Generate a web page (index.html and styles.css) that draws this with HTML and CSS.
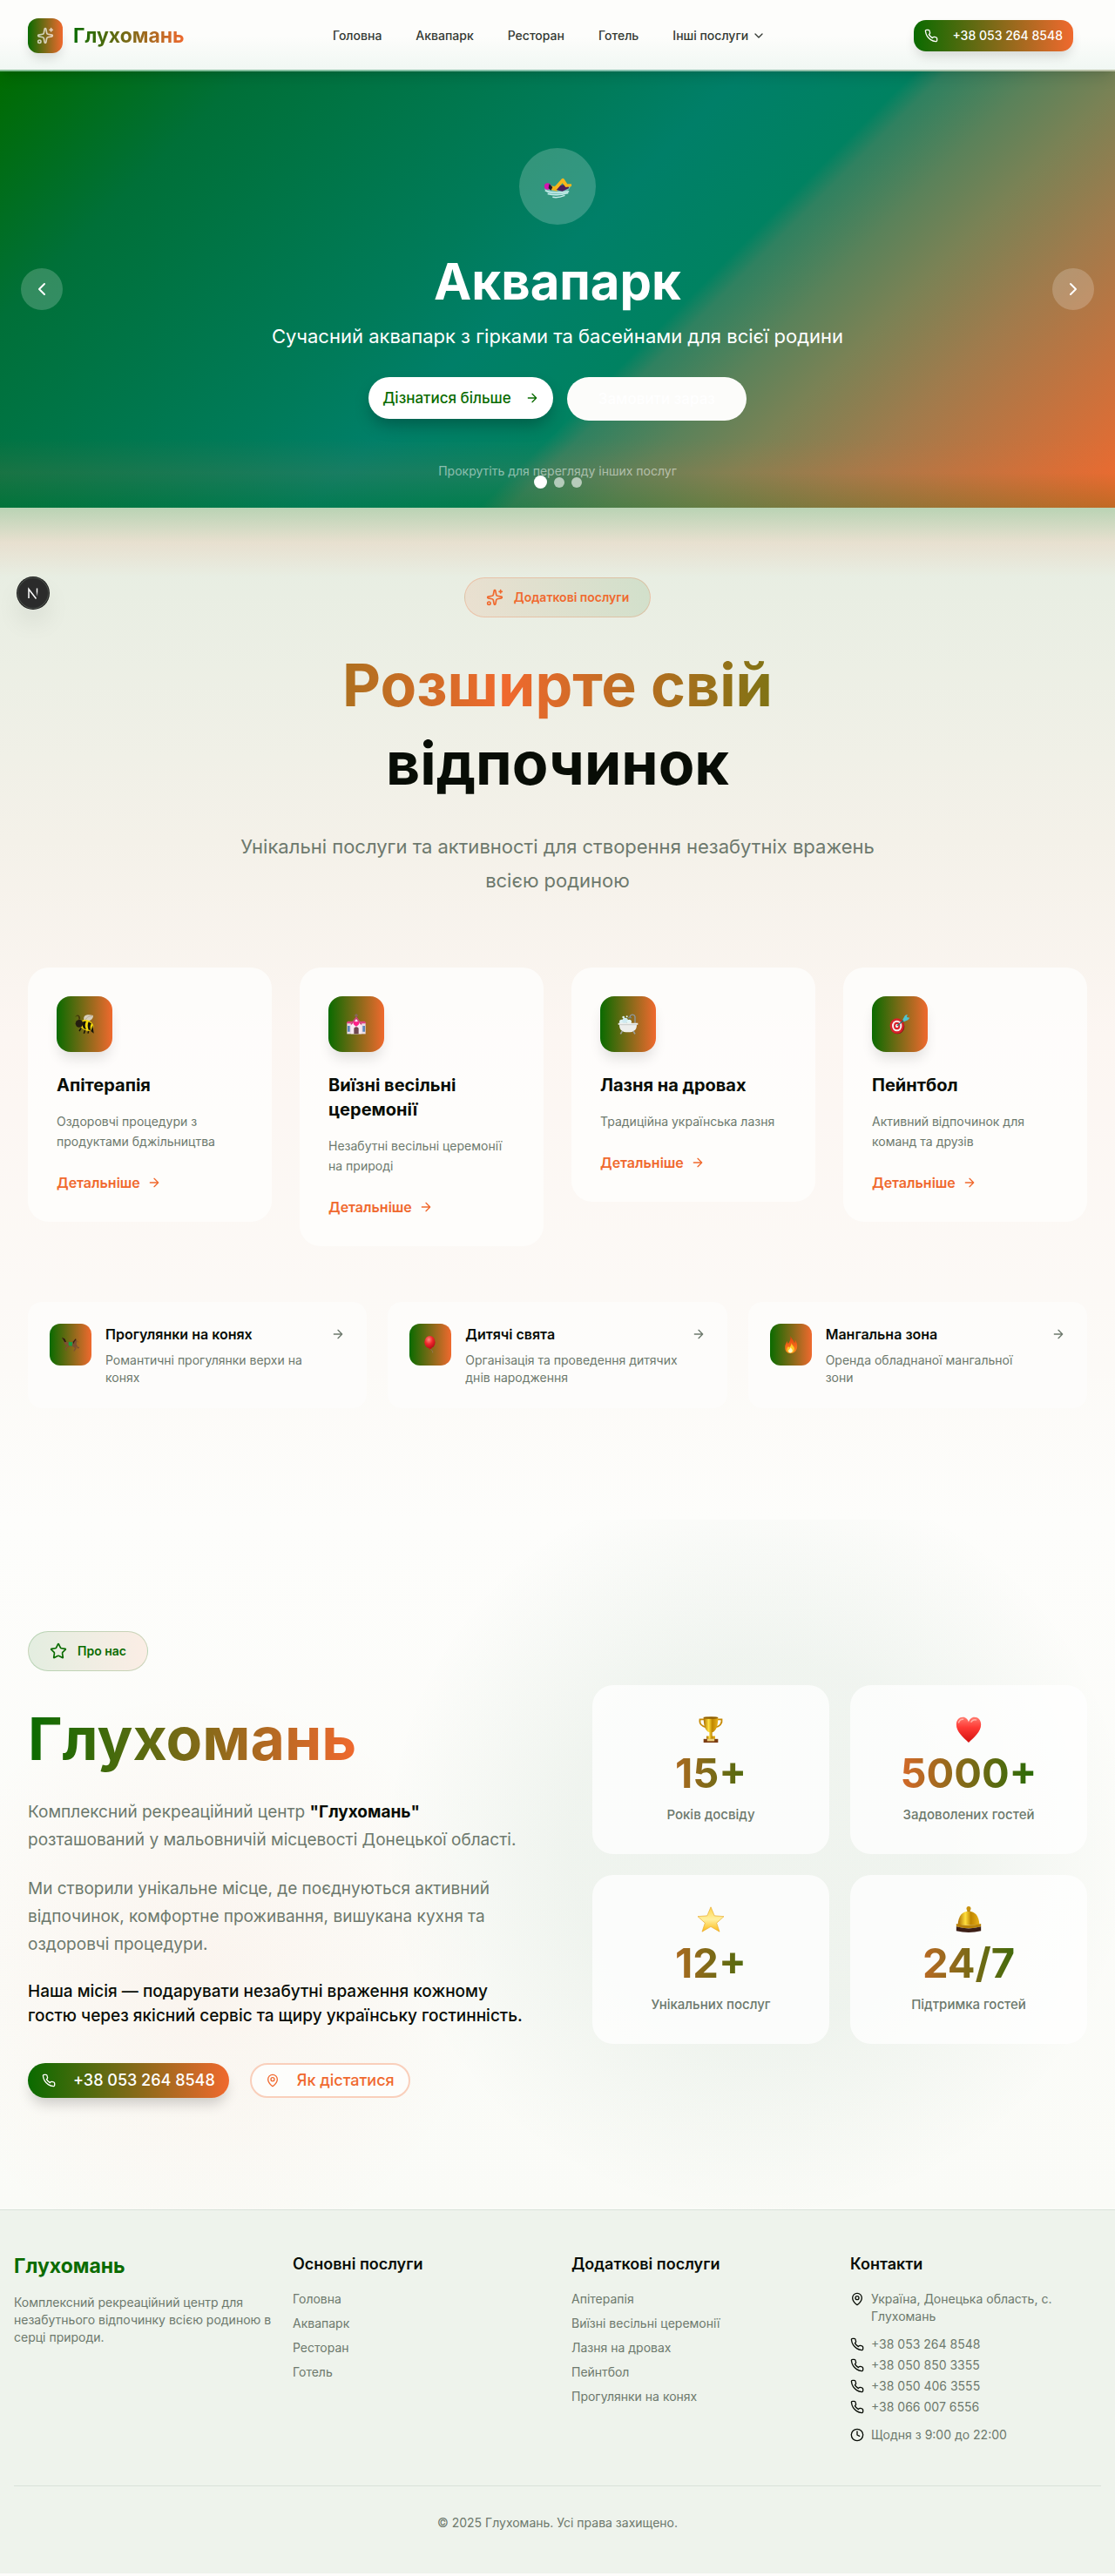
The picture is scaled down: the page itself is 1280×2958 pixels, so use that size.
FILE: index.html
```html
<!DOCTYPE html>
<html lang="uk">
<head>
<meta charset="utf-8">
<meta name="viewport" content="width=device-width, initial-scale=1">
<title>Глухомань</title>
<link rel="stylesheet" href="styles.css">
</head>
<body>
<svg class="sprite" aria-hidden="true">
  <defs>
    <linearGradient id="gold" x1="0" x2="1" y1="0" y2="0"><stop offset="0" stop-color="#a86a00"/><stop offset=".35" stop-color="#ffdf3d"/><stop offset=".6" stop-color="#c08600"/><stop offset="1" stop-color="#e8b21c"/></linearGradient>
    <linearGradient id="red" x1="0" x2="0" y1="0" y2="1"><stop offset="0" stop-color="#ff7a6e"/><stop offset=".4" stop-color="#ff3a35"/><stop offset="1" stop-color="#d3120f"/></linearGradient>
    <linearGradient id="sun" x1="0" x2="0" y1="0" y2="1"><stop offset="0" stop-color="#ffd34a"/><stop offset=".5" stop-color="#fff0a0"/><stop offset="1" stop-color="#fdb913"/></linearGradient>
    <linearGradient id="flame" x1="0" x2="0" y1="0" y2="1"><stop offset="0" stop-color="#e23a10"/><stop offset="1" stop-color="#ff8a1e"/></linearGradient>
    <radialGradient id="ball" cx=".4" cy=".3" r=".7"><stop offset="0" stop-color="#ff8d7e"/><stop offset=".5" stop-color="#f0282c"/><stop offset="1" stop-color="#b80d18"/></radialGradient>
  </defs>
  <symbol id="sparkles" viewBox="0 0 24 24"><path d="M11.017 2.814a1 1 0 0 1 1.966 0l1.051 5.558a2 2 0 0 0 1.594 1.594l5.558 1.051a1 1 0 0 1 0 1.966l-5.558 1.051a2 2 0 0 0-1.594 1.594l-1.051 5.558a1 1 0 0 1-1.966 0l-1.051-5.558a2 2 0 0 0-1.594-1.594l-5.558-1.051a1 1 0 0 1 0-1.966l5.558-1.051a2 2 0 0 0 1.594-1.594z"/><path d="M20 2v4M22 4h-4"/><circle cx="4" cy="20" r="2"/></symbol>
  <symbol id="phone" viewBox="0 0 24 24"><path d="M22 16.92v3a2 2 0 0 1-2.18 2 19.79 19.79 0 0 1-8.63-3.07 19.5 19.5 0 0 1-6-6 19.79 19.79 0 0 1-3.07-8.67A2 2 0 0 1 4.11 2h3a2 2 0 0 1 2 1.72 12.84 12.84 0 0 0 .7 2.81 2 2 0 0 1-.45 2.11L8.09 9.91a16 16 0 0 0 6 6l1.27-1.27a2 2 0 0 1 2.11-.45 12.84 12.84 0 0 0 2.81.7A2 2 0 0 1 22 16.92z"/></symbol>
  <symbol id="chevron-down" viewBox="0 0 24 24"><path d="m6 9 6 6 6-6"/></symbol>
  <symbol id="chevron-left" viewBox="0 0 24 24"><path d="m15 18-6-6 6-6"/></symbol>
  <symbol id="chevron-right" viewBox="0 0 24 24"><path d="m9 18 6-6-6-6"/></symbol>
  <symbol id="arrow" viewBox="0 0 24 24"><path d="M5 12h14M12 5l7 7-7 7"/></symbol>
  <symbol id="star" viewBox="0 0 24 24"><path d="M11.525 2.295a.53.53 0 0 1 .95 0l2.31 4.679a2.123 2.123 0 0 0 1.595 1.16l5.166.756a.53.53 0 0 1 .294.904l-3.736 3.638a2.123 2.123 0 0 0-.611 1.878l.882 5.14a.53.53 0 0 1-.771.56l-4.618-2.428a2.122 2.122 0 0 0-1.973 0L6.396 21.01a.53.53 0 0 1-.77-.56l.881-5.139a2.122 2.122 0 0 0-.611-1.879L2.16 9.795a.53.53 0 0 1 .294-.906l5.165-.755a2.122 2.122 0 0 0 1.597-1.16z"/></symbol>
  <symbol id="pin" viewBox="0 0 24 24"><path d="M20 10c0 4.993-5.539 10.193-7.399 11.799a1 1 0 0 1-1.202 0C9.539 20.193 4 14.993 4 10a8 8 0 0 1 16 0"/><circle cx="12" cy="10" r="3"/></symbol>
  <symbol id="clock" viewBox="0 0 24 24"><circle cx="12" cy="12" r="10"/><path d="M12 6v6l4 2"/></symbol>

  <symbol id="swimmer" viewBox="0 0 36 36"><path d="M2 21c4-3 24-5 32-4-1 6-8 12-16 12C10 29 4 26 2 21z" fill="#8ecfcb" opacity=".7"/><path d="M16 18l14-3 2 5-8 4-9-2z" fill="#4d1c5c"/><path d="M13 20l10-11c1-1 2-1 3 0l4 6 5 0 0 3-7 1-4-5-7 8z" fill="#f7b61c"/><path d="M7 17l8 1 3 6-9-2z" fill="#f3b01a"/><circle cx="6" cy="18" r="4" fill="#d414b0"/><path d="M8 15l4 4-2 4-3-3z" fill="#241a28"/><path d="M3 23c6 3 18 3 29 1M6 27c7 2 15 2 25-1M12 31c5 1 10 0 15-2" fill="none" stroke="#c6ecea" stroke-width="1.6"/></symbol>
  <symbol id="bee" viewBox="0 0 36 36"><path d="M18 13C14 4 20 0 33 3c0 7-6 10-14 12z" fill="#d7cfbd"/><path d="M19 13C20 7 25 4 32 4" fill="none" stroke="#a89a80"/><path d="M3 5c3-4 6-1 6 6M6 4c2-2 4 0 4 5" fill="none" stroke="#3a2c0c" stroke-width="1.4"/><ellipse cx="22" cy="20" rx="12" ry="9" fill="#f5d90c" transform="rotate(25 22 20)"/><path d="M16 13c-2 4-2 9 1 13l4 1c-3-5-2-10 0-14zM25 14c-2 4-2 9 0 14l4 0c-2-4-1-8 1-11zM32 20l2 14-5-4z" fill="#16130a"/><circle cx="9" cy="17" r="6.500" fill="#241d10"/><path d="M12 25l-3 5M19 28l-2 6M25 30l-1 4" stroke="#16130a" stroke-width="2.200"/></symbol>
  <symbol id="wedding" viewBox="0 0 36 36"><path d="M18 0v8M15 3h6" stroke="#8a6470" stroke-width="1.500"/><path d="M2 15h32v20H2z" fill="#eadbe6"/><path d="M1 17l2-4h30l2 4z" fill="#e0457f"/><path d="M9 17l9-11 9 11v18H9z" fill="#f7eaf2"/><path d="M8 18L18 5l10 13-2 1-8-10-8 10z" fill="#c73d75"/><path d="M18 22c-8-5-5-9-2-9 1 0 2 1 2 2 0-1 1-2 2-2 3 0 6 4-2 9z" fill="#ff1f87"/><path d="M14 35V25q4-4 8 0v10z" fill="#6f4750"/><path d="M3 21h4v10H3zM29 21h4v10h-4z" fill="#5d86bb"/></symbol>
  <symbol id="bath" viewBox="0 0 36 36"><path d="M30 20V5q-1-4-6-3-3 1-3 4" fill="none" stroke="#8e9aa0" stroke-width="2"/><path d="M18 6h6v2h-6z" fill="#78858c"/><circle cx="7" cy="14" r="4" fill="#dff2f4"/><circle cx="13" cy="12" r="5" fill="#cfeaf0"/><circle cx="20" cy="14" r="4" fill="#e4f6f6"/><circle cx="10" cy="6" r="2" fill="#dff2f4"/><circle cx="16" cy="5" r="1.500" fill="#dff2f4"/><path d="M1 16h34v3h-2c0 9-5 13-15 13S3 28 3 19H1z" fill="#edeeec"/><path d="M3 19h30" stroke="#b8bcb9"/><path d="M8 30l-3 5M27 30l3 5" stroke="#9b9f9c" stroke-width="2.500"/></symbol>
  <symbol id="dart" viewBox="0 0 36 36"><ellipse cx="14" cy="22" rx="12" ry="13" fill="#8f1117"/><ellipse cx="13" cy="21" rx="12" ry="13" fill="#d8232b"/><ellipse cx="13" cy="21" rx="8.500" ry="9.500" fill="#f7eeee"/><ellipse cx="13" cy="21" rx="5.500" ry="6.500" fill="#d8232b"/><ellipse cx="13" cy="21" rx="2.500" ry="3" fill="#fff"/><path d="M13 21L30 7" stroke="#2a6e74" stroke-width="2"/><path d="M23 10l4-7 4-2-1 5 5 1-3 4-7 3z" fill="#4fc3cf"/></symbol>
  <symbol id="horse" viewBox="0 0 36 36"><path d="M35 13l-7-6-4 4-7 3-8-2-3-5-6-4 3 5 3 9 5 3-5 6 3 5 1-1-2-4 8-5 7 1 4 3-3 6 2 1 4-6-2-5 5 5 4-1-1-2-3 0-3-6 1-6 5 3z" fill="#7d5033"/><path d="M9 12L6 6 0 3l3 5 3 5z" fill="#2e1a10"/><path d="M23 12l5-6 2 1-4 5-2 5z" fill="#3b2114"/><path d="M14 12l8 1-1 8-7-1z" fill="#17a245"/></symbol>
  <symbol id="balloon" viewBox="0 0 36 36"><path d="M19 25c-2 4 5 4 4 10" fill="none" stroke="#92795e" stroke-width="1.500"/><ellipse cx="17" cy="13" rx="11" ry="13" fill="url(#ball)"/><path d="M15 28l3-4 3 3z" fill="#c3141b"/></symbol>
  <symbol id="fire" viewBox="0 0 36 36"><path d="M17 0c2 6 7 9 8 15 2-2 2-5 1-7 5 5 6 13 4 19-2 6-7 9-13 9S6 32 6 25c-1-6 2-9 4-14 1 3 1 4 2 5 4-4 6-9 5-16z" fill="url(#flame)"/><path d="M19 14c0 5 7 8 6 14-1 5-4 7-8 7s-8-3-7-8c0-3 2-4 3-6 0 2 1 3 2 3 2-2 4-5 4-10z" fill="#ffc928"/><path d="M17 24c3 3 5 5 4 8-2 4-7 4-8 0-1-3 3-4 4-8z" fill="#fff6c4"/></symbol>
  <symbol id="trophy" viewBox="0 0 36 36"><path d="M9 4H3c-1 6 3 10 9 11M27 4h6c1 6-3 10-9 11" fill="none" stroke="#c78a06" stroke-width="2.200"/><path d="M8 1h20c0 11-2 19-8 21v6h-4v-6C10 20 8 12 8 1z" fill="url(#gold)"/><ellipse cx="18" cy="1.800" rx="10" ry="1.500" fill="#8f5f04"/><path d="M12 27h12v4H12z" fill="url(#gold)"/><path d="M8 31h20v5H8z" fill="#7c3d12"/><path d="M13 31h10v3H13z" fill="#ecd17a"/></symbol>
  <symbol id="heart" viewBox="0 0 36 36"><path d="M18 36C10 28 1 21 1 11 1 5 5 1 10 1c4 0 7 3 8 7 1-4 4-7 8-7 5 0 9 4 9 10 0 10-9 17-17 25z" fill="url(#red)"/><path d="M4 9q2-6 7-5M21 8q3-5 8-3" fill="none" stroke="#ffb3aa" stroke-width="1.800"/></symbol>
  <symbol id="gold-star" viewBox="0 0 36 36"><path d="M18 1l5 12 13 1-10 9 4 12-12-7-12 7 4-12L0 14l13-1z" fill="url(#sun)" stroke="#e7a92e" stroke-width=".8"/></symbol>
  <symbol id="bell" viewBox="0 0 36 36"><path d="M16 3h4v8h-4z" fill="#a6730b"/><circle cx="18" cy="3" r="3" fill="#c8930f"/><path d="M3 26C4 13 9 7 18 7s14 6 15 19z" fill="url(#gold)"/><path d="M1 24q17 5 34 0v4q-17 5-34 0z" fill="#b98309"/><path d="M1 28q17 5 34 0v6q-17 4-34 0z" fill="#3c1f16"/></symbol>
</svg>

<header class="site-header">
  <a class="brand" href="#"><span class="brand-mark"><svg class="icon icon-md"><use href="#sparkles"/></svg></span><span class="brand-name gradient-text">Глухомань</span></a>
  <nav class="main-nav">
    <a href="#">Головна</a>
    <a href="#">Аквапарк</a>
    <a href="#">Ресторан</a>
    <a href="#">Готель</a>
    <button type="button">Інші послуги<svg class="icon"><use href="#chevron-down"/></svg></button>
  </nav>
  <a class="call-link" href="tel:+380532648548"><svg class="icon"><use href="#phone"/></svg>+38 053 264 8548</a>
</header>

<main>
  <section class="hero">
    <div class="hero-badge"><svg class="swimmer"><use href="#swimmer"/></svg></div>
    <h1>Аквапарк</h1>
    <p class="hero-lead">Сучасний аквапарк з гірками та басейнами для всієї родини</p>
    <div class="hero-actions">
      <a class="btn-light" href="#">Дізнатися більше<svg class="icon"><use href="#arrow"/></svg></a>
      <a class="btn-ghost" href="#">Замовити зараз</a>
    </div>
    <p class="hero-hint">Прокрутіть для перегляду інших послуг</p>
    <button class="slide-btn slide-prev" type="button" aria-label="Назад"><svg class="icon icon-lg"><use href="#chevron-left"/></svg></button>
    <button class="slide-btn slide-next" type="button" aria-label="Вперед"><svg class="icon icon-lg"><use href="#chevron-right"/></svg></button>
    <div class="dots">
      <button class="dot dot-active" type="button" aria-label="Слайд 1"></button>
      <button class="dot" type="button" aria-label="Слайд 2"></button>
      <button class="dot" type="button" aria-label="Слайд 3"></button>
    </div>
  </section>

  <section class="services">
    <button class="dev-badge" type="button" aria-label="Next.js"><svg viewBox="0 0 36 36" width="36" height="36"><defs><linearGradient id="fade" x1="0" y1="0" x2="0" y2="1"><stop offset=".4" stop-color="#fff"/><stop offset="1" stop-color="#fff" stop-opacity="0"/></linearGradient></defs><path d="M13 24V13.500L21.500 24.500" fill="none" stroke="#fff" stroke-width="1.500"/><path d="M21.800 12.500h1.400v9.500h-1.400z" fill="url(#fade)"/></svg></button>
    <div class="pill pill-accent"><svg class="icon icon-md"><use href="#sparkles"/></svg>Додаткові послуги</div>
    <h2 class="display"><span class="wave-text">Розширте свій</span><br>відпочинок</h2>
    <p class="services-lead">Унікальні послуги та активності для створення незабутніх вражень всією родиною</p>

    <div class="cards">
      <article class="card">
        <div class="tile tile-lg"><svg><use href="#bee"/></svg></div>
        <h3>Апітерапія</h3>
        <p>Оздоровчі процедури з продуктами бджільництва</p>
        <a href="#">Детальніше<svg class="icon"><use href="#arrow"/></svg></a>
      </article>
      <article class="card">
        <div class="tile tile-lg"><svg><use href="#wedding"/></svg></div>
        <h3>Виїзні весільні церемонії</h3>
        <p>Незабутні весільні церемонії на природі</p>
        <a href="#">Детальніше<svg class="icon"><use href="#arrow"/></svg></a>
      </article>
      <article class="card">
        <div class="tile tile-lg"><svg><use href="#bath"/></svg></div>
        <h3>Лазня на дровах</h3>
        <p>Традиційна українська лазня</p>
        <a href="#">Детальніше<svg class="icon"><use href="#arrow"/></svg></a>
      </article>
      <article class="card">
        <div class="tile tile-lg"><svg><use href="#dart"/></svg></div>
        <h3>Пейнтбол</h3>
        <p>Активний відпочинок для команд та друзів</p>
        <a href="#">Детальніше<svg class="icon"><use href="#arrow"/></svg></a>
      </article>
    </div>

    <div class="mini-cards">
      <a class="mini-card" href="#">
        <span class="tile"><svg><use href="#horse"/></svg></span>
        <span class="mini-text"><strong>Прогулянки на конях</strong><span>Романтичні прогулянки верхи на конях</span></span>
        <svg class="icon"><use href="#arrow"/></svg>
      </a>
      <a class="mini-card" href="#">
        <span class="tile"><svg><use href="#balloon"/></svg></span>
        <span class="mini-text"><strong>Дитячі свята</strong><span>Організація та проведення дитячих днів народження</span></span>
        <svg class="icon"><use href="#arrow"/></svg>
      </a>
      <a class="mini-card" href="#">
        <span class="tile"><svg><use href="#fire"/></svg></span>
        <span class="mini-text"><strong>Мангальна зона</strong><span>Оренда обладнаної мангальної зони</span></span>
        <svg class="icon"><use href="#arrow"/></svg>
      </a>
    </div>
  </section>

  <section class="about">
    <div class="about-text">
      <div class="pill pill-primary"><svg class="icon icon-md"><use href="#star"/></svg>Про нас</div>
      <h2 class="display"><span class="gradient-text">Глухомань</span></h2>
      <p>Комплексний рекреаційний центр <strong>"Глухомань"</strong> розташований у мальовничій місцевості Донецької області.</p>
      <p>Ми створили унікальне місце, де поєднуються активний відпочинок, комфортне проживання, вишукана кухня та оздоровчі процедури.</p>
      <p class="mission">Наша місія — подарувати незабутні враження кожному гостю через якісний сервіс та щиру українську гостинність.</p>
      <div class="about-actions">
        <a class="btn-call" href="tel:+380532648548"><svg class="icon"><use href="#phone"/></svg>+38 053 264 8548</a>
        <a class="btn-route" href="#"><svg class="icon"><use href="#pin"/></svg>Як дістатися</a>
      </div>
    </div>
    <div class="stats">
      <div class="stat"><svg><use href="#trophy"/></svg><b>15+</b><span>Років досвіду</span></div>
      <div class="stat"><svg><use href="#heart"/></svg><b>5000+</b><span>Задоволених гостей</span></div>
      <div class="stat"><svg><use href="#gold-star"/></svg><b>12+</b><span>Унікальних послуг</span></div>
      <div class="stat"><svg><use href="#bell"/></svg><b>24/7</b><span>Підтримка гостей</span></div>
    </div>
  </section>
</main>

<footer class="site-footer">
  <div class="footer-grid">
    <div class="footer-about">
      <p class="footer-brand">Глухомань</p>
      <p>Комплексний рекреаційний центр для незабутнього відпочинку всією родиною в серці природи.</p>
    </div>
    <div>
      <h4>Основні послуги</h4>
      <ul class="links">
        <li><a href="#">Головна</a></li>
        <li><a href="#">Аквапарк</a></li>
        <li><a href="#">Ресторан</a></li>
        <li><a href="#">Готель</a></li>
      </ul>
    </div>
    <div>
      <h4>Додаткові послуги</h4>
      <ul class="links">
        <li><a href="#">Апітерапія</a></li>
        <li><a href="#">Виїзні весільні церемонії</a></li>
        <li><a href="#">Лазня на дровах</a></li>
        <li><a href="#">Пейнтбол</a></li>
        <li><a href="#">Прогулянки на конях</a></li>
      </ul>
    </div>
    <div>
      <h4>Контакти</h4>
      <div class="contacts">
        <p><svg class="icon"><use href="#pin"/></svg><span>Україна, Донецька область, с. Глухомань</span></p>
        <ul class="phones">
          <li><svg class="icon"><use href="#phone"/></svg><a href="tel:+380532648548">+38 053 264 8548</a></li>
          <li><svg class="icon"><use href="#phone"/></svg><a href="tel:+380508503355">+38 050 850 3355</a></li>
          <li><svg class="icon"><use href="#phone"/></svg><a href="tel:+380504063555">+38 050 406 3555</a></li>
          <li><svg class="icon"><use href="#phone"/></svg><a href="tel:+380660076556">+38 066 007 6556</a></li>
        </ul>
        <p><svg class="icon"><use href="#clock"/></svg><span>Щодня з 9:00 до 22:00</span></p>
      </div>
    </div>
  </div>
  <p class="copyright">© 2025 Глухомань. Усі права захищено.</p>
</footer>
</body>
</html>
```
FILE: styles.css
```css
:root {
  --primary: #0a6b00;
  --accent: #f0692e;
  --ink: #080d06;
  --muted: #6d796d;
  --brand-gradient: linear-gradient(90deg, #0a6b00, #f0692e);
}

* { box-sizing: border-box; }

body {
  margin: 0;
  font-family: Inter, "Noto Sans", sans-serif;
  font-size: 14px;
  line-height: 20px;
  color: var(--ink);
  background: #fdfdfb;
}

h1, h2, h3, h4, p, ul { margin: 0; padding: 0; }
ul { list-style: none; }
a { color: inherit; text-decoration: none; }
button { font: inherit; color: inherit; border: 0; padding: 0; background: none; cursor: pointer; }

.sprite { position: absolute; width: 0; height: 0; }

.icon {
  width: 16px;
  height: 16px;
  flex: none;
  fill: none;
  stroke: currentColor;
  stroke-width: 2;
  stroke-linecap: round;
  stroke-linejoin: round;
}
.icon-md { width: 20px; height: 20px; }
.icon-lg { width: 24px; height: 24px; }

.gradient-text {
  background: var(--brand-gradient);
  background-clip: text;
  color: transparent;
}

/* Header */
.site-header {
  position: relative;
  z-index: 2;
  display: flex;
  align-items: center;
  justify-content: space-between;
  height: 82px;
  padding: 0 48px 0 32px;
  background:
    linear-gradient(90deg, #83bd92, #83bfae 60%, #b9bfa4) bottom / 100% 2px no-repeat,
    linear-gradient(180deg, #fdfdfb 50%, #f0f7f3);
  box-shadow: 0 10px 15px -3px rgba(0, 0, 0, .1), 0 4px 6px -4px rgba(0, 0, 0, .1);
}
.brand { display: flex; align-items: center; gap: 12px; }
.brand-mark {
  display: grid;
  place-items: center;
  width: 40px;
  height: 40px;
  border-radius: 12px;
  background: var(--brand-gradient);
  color: rgba(255, 255, 255, .7);
  box-shadow: 0 8px 14px -3px rgba(0, 0, 0, .15);
}
.brand-name { font-size: 23px; line-height: 32px; font-weight: 700; }
.main-nav { display: flex; align-items: center; gap: 39px; font-weight: 500; color: #343a33; }
.main-nav button { display: flex; align-items: center; gap: 4px; }
.call-link {
  display: flex;
  align-items: center;
  gap: 16px;
  height: 36px;
  padding: 0 12px;
  border-radius: 14px;
  background: var(--brand-gradient);
  color: #fff;
  font-weight: 500;
  box-shadow: 0 8px 14px -3px rgba(0, 0, 0, .15);
}

/* Hero */
.hero {
  position: relative;
  display: flex;
  flex-direction: column;
  align-items: center;
  padding: 88px 96px 32px;
  text-align: center;
  color: #fff;
  background:
    linear-gradient(0deg, rgba(10, 107, 0, .2), rgba(240, 105, 46, .1) 50%, rgba(240, 105, 46, 0)) bottom / 100% 80px no-repeat,
    linear-gradient(135deg, #006b00 0%, #007038 16%, #007b5a 40%, #007f68 48%, #008261 59%, #2f8160 61%, #5a825a 67%, #7a8255 73%, #a07b4c 81%, #f0692e 100%);
}
.hero-badge {
  display: grid;
  place-items: center;
  width: 88px;
  height: 88px;
  border-radius: 50%;
  background: rgba(255, 255, 255, .2);
}
.swimmer { width: 34px; height: 34px; }
.hero h1 { margin-top: 28px; font-size: 58px; line-height: 75px; font-weight: 700; }
.hero-lead { margin-top: 8px; font-size: 22px; line-height: 34px; }
.hero-actions { display: flex; align-items: flex-start; gap: 16px; margin-top: 30px; font-size: 17px; font-weight: 500; }
.btn-light {
  display: flex;
  align-items: center;
  gap: 16px;
  height: 48px;
  padding: 0 16px;
  border-radius: 24px;
  background: #fff;
  color: var(--primary);
  box-shadow: 0 10px 20px -4px rgba(0, 0, 0, .3);
}
.btn-ghost {
  display: flex;
  align-items: center;
  height: 50px;
  padding: 0 36px;
  border-radius: 25px;
  background: #fcfcfa;
  color: #fff;
}
.hero-hint { margin-top: 48px; color: rgba(255, 255, 255, .5); }
.slide-btn {
  position: absolute;
  top: 50%;
  display: grid;
  place-items: center;
  width: 48px;
  height: 48px;
  margin-top: -25px;
  border-radius: 50%;
  background: rgba(255, 255, 255, .2);
}
.slide-prev { left: 24px; }
.slide-next { right: 24px; }
.dots {
  position: absolute;
  bottom: 22px;
  left: 0;
  right: 0;
  display: flex;
  align-items: center;
  justify-content: center;
  gap: 8px;
}
.dot { width: 12px; height: 12px; border-radius: 50%; background: rgba(255, 255, 255, .6); }
.dot-active { width: 15px; height: 15px; background: #fff; }

/* Services */
.services {
  position: relative;
  padding: 80px 32px 128px;
  background:
    linear-gradient(180deg, rgba(10, 107, 0, .2), rgba(240, 105, 46, .1) 50%, rgba(240, 105, 46, 0)) top / 100% 80px no-repeat,
    linear-gradient(180deg, #e5ede1, #f4f1e9 33%, #fcf6f2 52%, #fcfaf7 85%, #fdfdfb);
}
.dev-badge {
  position: absolute;
  top: 80px;
  left: 20px;
  width: 36px;
  height: 36px;
  border-radius: 50%;
  background: #2b2b2b;
  box-shadow: 0 0 0 1px #171717, inset 0 0 0 1px #4a4f4a, 0 16px 32px -8px rgba(0, 0, 0, .24);
}
.pill {
  display: flex;
  align-items: center;
  gap: 12px;
  width: fit-content;
  height: 46px;
  padding: 0 24px;
  border: 1px solid;
  border-radius: 23px;
  font-weight: 600;
}
.pill-accent {
  margin: 0 auto;
  color: var(--accent);
  border-color: rgba(240, 105, 46, .25);
  background: linear-gradient(90deg, rgba(240, 105, 46, .1), rgba(10, 107, 0, .1));
}
.pill-primary {
  color: var(--primary);
  border-color: rgba(10, 107, 0, .2);
  background: linear-gradient(90deg, rgba(10, 107, 0, .1), rgba(240, 105, 46, .1));
}
.display { margin-top: 32px; font-size: 68px; line-height: 90px; font-weight: 700; }
.services .display, .services-lead { text-align: center; }
.wave-text {
  background: linear-gradient(90deg, #ad701f, #f0692e 38%, #7f7314);
  background-clip: text;
  color: transparent;
}
.services-lead { max-width: 768px; margin: 32px auto 80px; font-size: 22px; line-height: 39px; color: var(--muted); }

.cards { display: grid; grid-template-columns: repeat(4, minmax(0, 1fr)); align-items: start; gap: 32px; }
.card { padding: 33px; border-radius: 24px; background: rgba(254, 254, 253, .8); }
.card h3 { margin-top: 24px; font-size: 20px; line-height: 28px; font-weight: 700; }
.card p { margin-top: 16px; line-height: 23px; color: var(--muted); }
.card a { display: flex; align-items: center; gap: 8px; margin-top: 24px; font-size: 16px; line-height: 24px; font-weight: 600; color: var(--accent); }
.tile {
  display: grid;
  place-items: center;
  flex: none;
  width: 48px;
  height: 48px;
  border-radius: 12px;
  background: var(--brand-gradient);
}
.tile svg { width: 20px; height: 20px; }
.tile-lg { width: 64px; height: 64px; border-radius: 16px; box-shadow: 0 10px 15px -3px rgba(0, 0, 0, .12); }
.tile-lg svg { width: 24px; height: 24px; }

.mini-cards { display: grid; grid-template-columns: repeat(3, minmax(0, 1fr)); gap: 24px; margin-top: 64px; }
.mini-card { display: flex; gap: 16px; padding: 25px; border-radius: 16px; background: rgba(254, 254, 253, .6); color: var(--muted); }
.mini-card .icon { margin-top: 4px; }
.mini-text { display: flex; flex: 1; min-width: 0; flex-direction: column; gap: 8px; }
.mini-text strong { font-size: 16px; line-height: 24px; font-weight: 600; color: var(--ink); }

/* About */
.about {
  display: grid;
  grid-template-columns: repeat(2, minmax(0, 1fr));
  align-items: center;
  gap: 80px;
  padding: 128px 32px;
  background:
    radial-gradient(circle 430px at 68% 47%, rgba(10, 90, 40, .05), rgba(10, 90, 40, .05) 50%, rgba(10, 90, 40, 0)),
    radial-gradient(circle 330px at 18% 66%, rgba(240, 105, 46, .05), rgba(240, 105, 46, 0)),
    linear-gradient(180deg, #fdfdfb, #fafbf7);
}
.about-text { margin-right: -12px; }
.about-text p { margin-top: 24px; font-size: 19px; line-height: 32px; color: var(--muted); }
.about-text strong { font-weight: 700; color: var(--ink); }
.about-text .mission { line-height: 28px; font-weight: 500; color: var(--ink); }
.about-actions { display: flex; gap: 24px; margin-top: 40px; font-size: 18px; font-weight: 500; }
.btn-call, .btn-route { display: flex; align-items: center; gap: 20px; height: 40px; padding: 0 16px; border-radius: 20px; }
.btn-call { background: var(--brand-gradient); color: #fff; box-shadow: 0 10px 15px -3px rgba(0, 0, 0, .18); }
.btn-route { border: 2px solid #f9cfbb; background: #fdfdfb; color: var(--accent); }
.stats { display: grid; grid-template-columns: repeat(2, minmax(0, 1fr)); gap: 24px; }
.stat { display: flex; flex-direction: column; align-items: center; padding: 33px; border-radius: 24px; background: rgba(255, 255, 255, .75); }
.stat svg { width: 30px; height: 30px; margin: 3px 0 11px; }
.stat b {
  width: 100%;
  margin-bottom: 12px;
  font-size: 47px;
  line-height: 48px;
  font-weight: 700;
  text-align: center;
  background: linear-gradient(90deg, #f0692e, #0a6b00);
  background-clip: text;
  color: transparent;
}
.stat span { font-size: 15px; line-height: 24px; font-weight: 500; color: var(--muted); white-space: nowrap; }

/* Footer */
.site-footer { padding: 48px 16px; border-top: 1px solid #d8e2da; background: #eef3ec; color: var(--muted); }
.footer-grid { display: grid; grid-template-columns: repeat(4, minmax(0, 1fr)); gap: 32px; padding-bottom: 48px; border-bottom: 1px solid #d8e2da; }
.footer-about { margin-right: -16px; }
.footer-brand { margin-bottom: 16px; font-size: 23px; line-height: 32px; font-weight: 700; color: var(--primary); }
.site-footer h4 { margin-bottom: 16px; font-size: 18px; line-height: 28px; font-weight: 600; color: var(--ink); }
.links { display: grid; gap: 8px; }
.contacts { display: grid; gap: 12px; }
.contacts p, .phones li { display: flex; gap: 8px; }
.contacts .icon { margin-top: 2px; color: var(--ink); }
.phones { display: grid; gap: 4px; }
.copyright { margin-top: 32px; text-align: center; }
```
